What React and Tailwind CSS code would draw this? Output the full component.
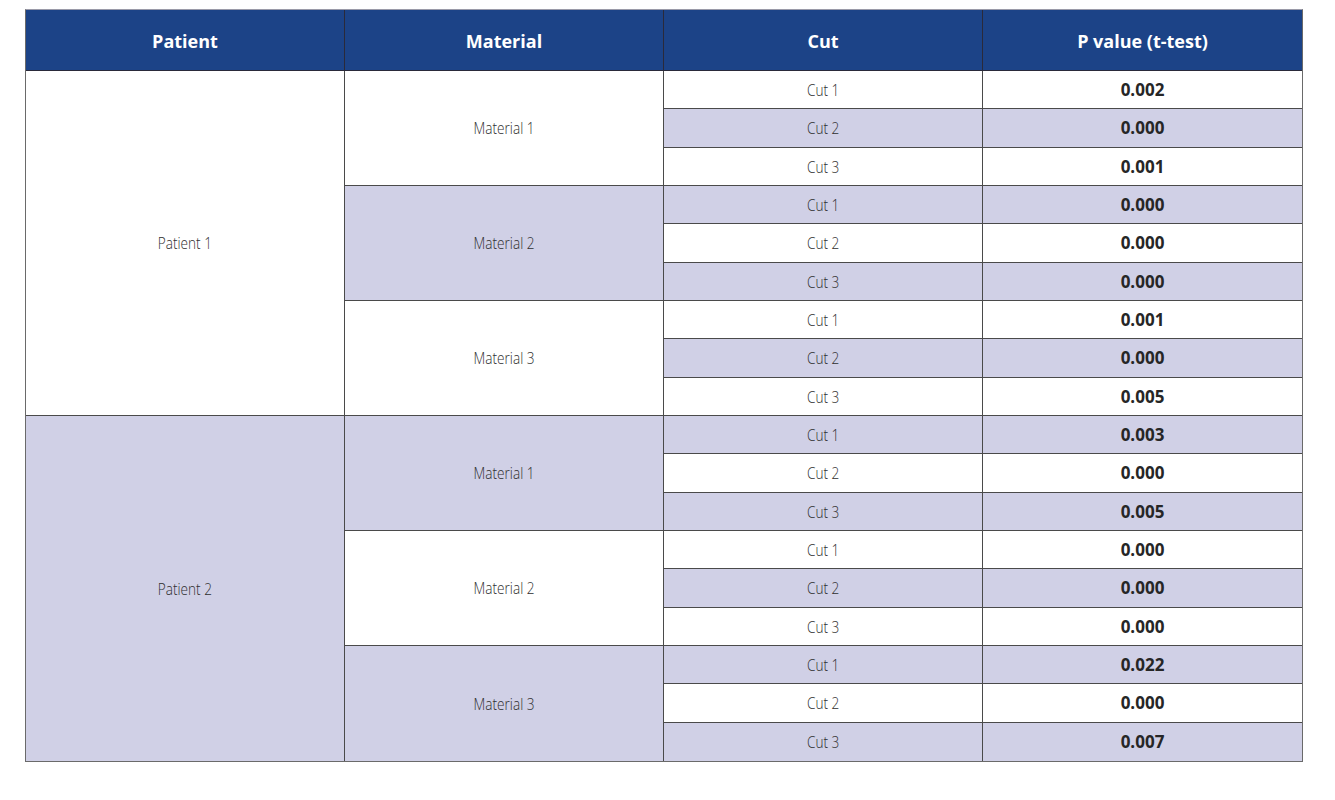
import React from "react";

const data = [
  ["0.002", "0.000", "0.001", "0.000", "0.000", "0.000", "0.001", "0.000", "0.005"],
  ["0.003", "0.000", "0.005", "0.000", "0.000", "0.000", "0.022", "0.000", "0.007"],
];

const LAV = "bg-[#d0d0e6]";
const WHITE = "bg-white";

function Light({ children }) {
  return (
    <span className="inline-block scale-x-[0.8] font-light text-[17px] text-[#2e2e2e]">
      {children}
    </span>
  );
}

function CutRow({ n, value, lav }) {
  return (
    <div className={`grid grid-cols-[319px_319px] h-[38.33px] border-b border-[#4a4a4a] ${lav ? LAV : WHITE}`}>
      <div className="flex items-center justify-center border-r border-[#4a4a4a]">
        <Light>Cut {n}</Light>
      </div>
      <div className="flex items-center justify-center font-bold text-[17px] text-[#262626]">
        {value}
      </div>
    </div>
  );
}

function MaterialBlock({ m, values, lav, startIndex }) {
  return (
    <div className="flex">
      <div className={`w-[319px] flex items-center justify-center border-r border-b border-[#4a4a4a] ${lav ? LAV : WHITE}`}>
        <Light>Material {m}</Light>
      </div>
      <div className="flex flex-col">
        {values.map((v, i) => (
          <CutRow key={i} n={i + 1} value={v} lav={(startIndex + i) % 2 === 1} />
        ))}
      </div>
    </div>
  );
}

function PatientBlock({ p }) {
  const vals = data[p];
  return (
    <div className="flex">
      <div className={`w-[319px] flex items-center justify-center border-r border-b border-[#4a4a4a] ${p === 1 ? LAV : WHITE}`}>
        <Light>Patient {p + 1}</Light>
      </div>
      <div className="flex flex-col">
        {[0, 1, 2].map((m) => (
          <MaterialBlock
            key={m}
            m={m + 1}
            values={vals.slice(m * 3, m * 3 + 3)}
            lav={(p * 3 + m) % 2 === 1}
            startIndex={p * 9 + m * 3}
          />
        ))}
      </div>
    </div>
  );
}

export default function App() {
  const heads = ["Patient", "Material", "Cut", "P value (t-test)"];
  return (
    <div className="w-[1335px] h-[800px] bg-white [font-family:'Open_Sans',sans-serif]">
      <div className="pt-[9px] pl-[25px]">
        <div className="w-[1278px] border border-[#6a6a6a] border-t-[#9a9aa8] [&>div:last-child>div:first-child]:border-b-0 [&>div:last-child>div:last-child>div:last-child>div:first-child]:border-b-0 [&>div:last-child>div:last-child>div:last-child>div:last-child>div:last-child]:border-b-0">
          <div className="grid grid-cols-[319px_319px_319px_319px] h-[61px] bg-[#1c4387] border-b border-[#2a2a3a]">
            {heads.map((h, i) => (
              <div
                key={h}
                className={`flex items-center justify-center pt-[3px] text-white font-bold text-[18px] ${i < 3 ? "border-r border-[#2a2a3a]" : ""}`}
              >
                {h}
              </div>
            ))}
          </div>
          <PatientBlock p={0} />
          <PatientBlock p={1} />
        </div>
      </div>
    </div>
  );
}
